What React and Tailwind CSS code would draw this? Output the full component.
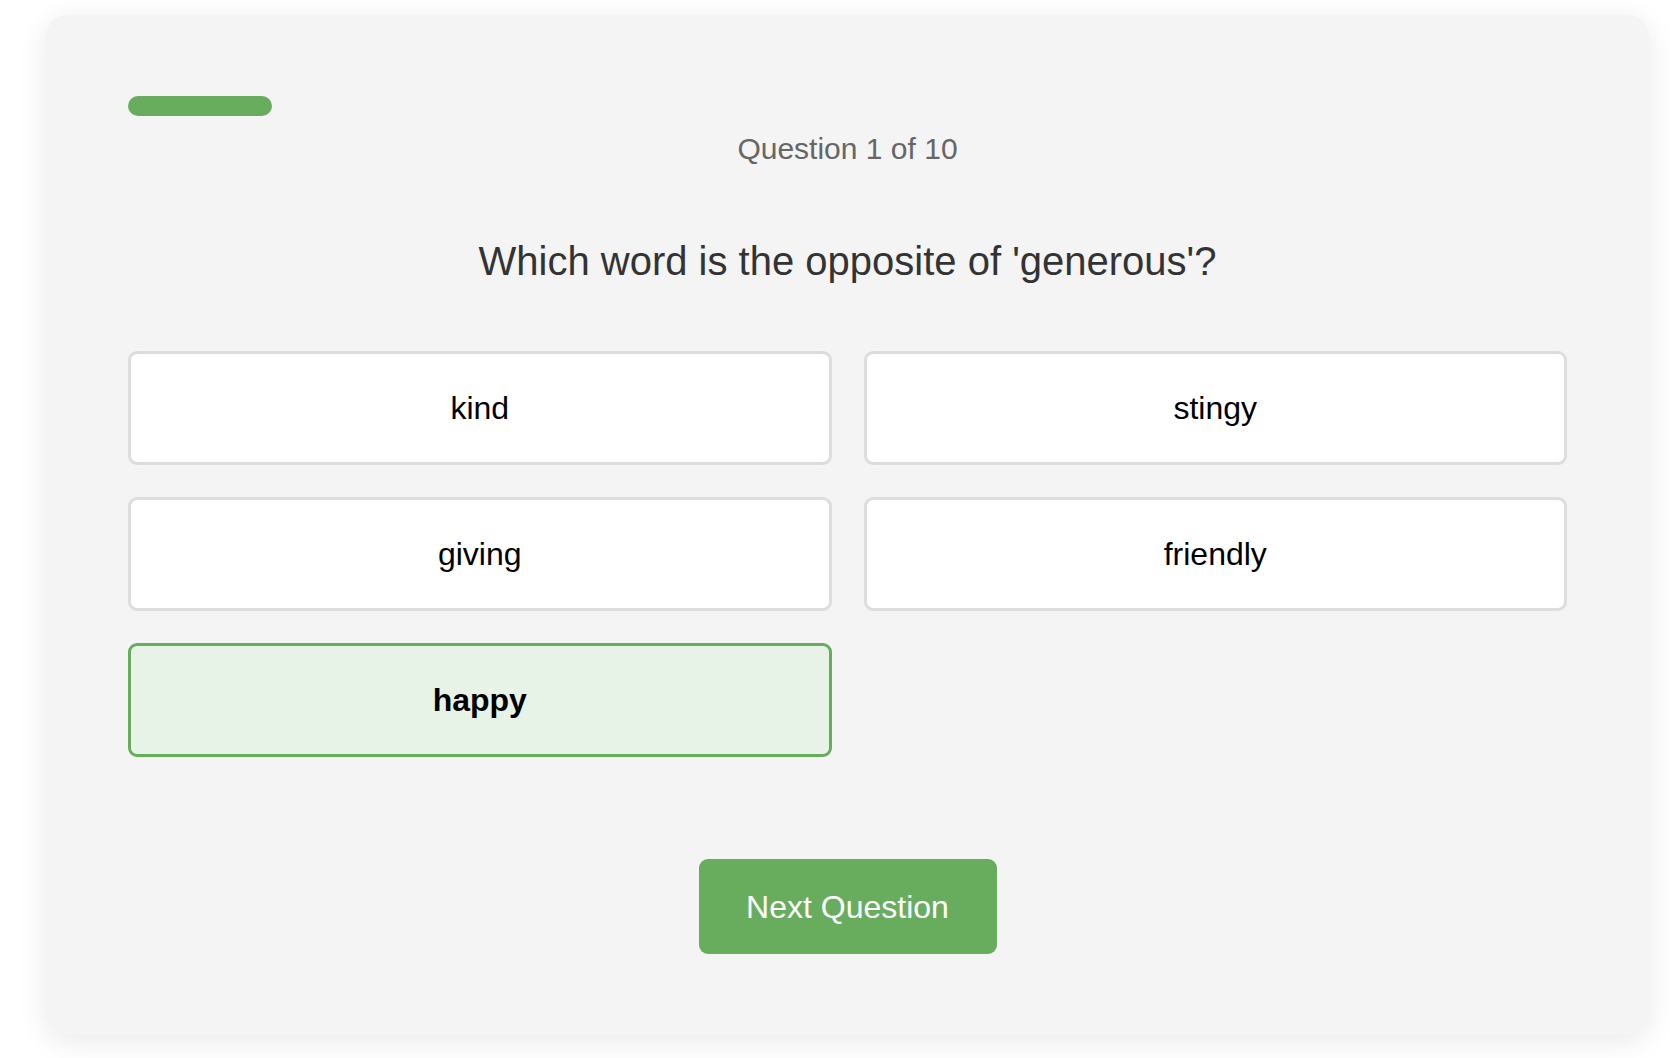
const options = ["kind", "stingy", "giving", "friendly", "happy"];

export default function App() {
  const selected = "happy";
  const current = 1;
  const total = 10;

  return (
    <div className="min-h-screen bg-white pt-[15px] pl-[46px] font-['Liberation_Sans',Arial,sans-serif]">
      <div className="w-[1603px] h-[1020px] rounded-[21px] bg-[#f4f4f4] p-[82px] pt-[81px] shadow-[0_6px_30px_rgba(0,0,0,0.09)]">
        <div className="h-[20px] w-full rounded-full">
          <div className="h-full w-[10%] rounded-full bg-[#68ad5e]" />
        </div>

        <p className="mt-[15px] text-center text-[30px] leading-[36px] text-[#666]">
          Question {current} of {total}
        </p>

        <h2 className="mt-[70px] text-center text-[40px] leading-[48px] text-[#333]">
          Which word is the opposite of 'generous'?
        </h2>

        <div className="mt-[66px] grid grid-cols-2 gap-[32px]">
          {options.map((opt) => {
            const active = opt === selected;
            return (
              <button
                key={opt}
                className={`h-[114px] rounded-[9px] border-[3px] text-[32px] text-black ${
                  active
                    ? "border-[#68ad5e] bg-[#e8f3e7] font-bold"
                    : "border-[#dddddd] bg-white"
                }`}
              >
                {opt}
              </button>
            );
          })}
        </div>

        <div className="mt-[102px] flex justify-center">
          <button className="h-[95px] w-[298px] rounded-[9px] bg-[#68ad5e] text-[32px] text-white">
            Next Question
          </button>
        </div>
      </div>
    </div>
  );
}
